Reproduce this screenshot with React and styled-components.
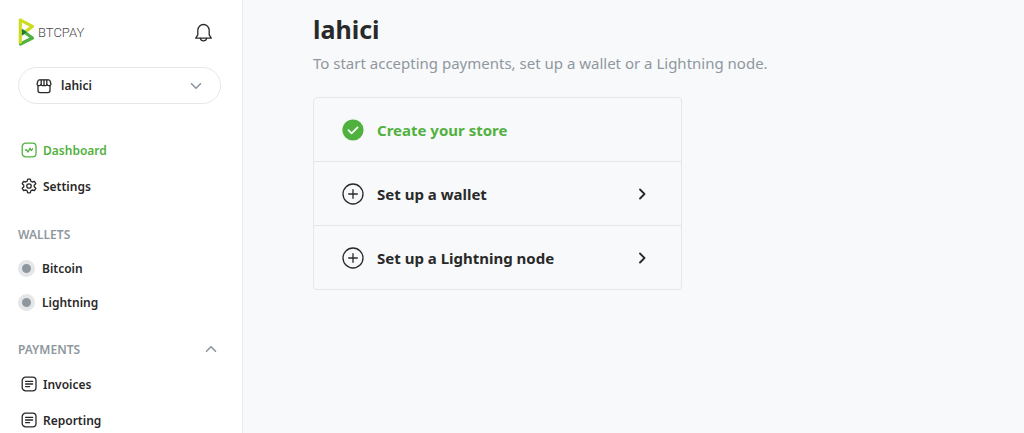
import React, { useState } from "react";
import styled, { createGlobalStyle } from "styled-components";

const GlobalStyle = createGlobalStyle`
  * {
    box-sizing: border-box;
  }

  body {
    margin: 0;
    background: #f8f9fb;
    color: #292929;
    font-family: "Noto Sans", "Open Sans", sans-serif;
  }
`;

const Layout = styled.div`
  display: flex;
  height: 100vh;
  overflow: hidden;
`;

const Sidebar = styled.aside`
  flex: none;
  width: 243px;
  padding: 18px 21px 0 18px;
  background: #ffffff;
  border-right: 1px solid #e9ecef;
  overflow: hidden;
`;

const SidebarHeader = styled.header`
  display: flex;
  align-items: center;
  justify-content: space-between;
  height: 28px;
  padding-right: 8px;
`;

const Brand = styled.a`
  display: flex;
  align-items: center;
  gap: 3px;
  color: #4a4a4a;
  font-family: Roboto, sans-serif;
  font-size: 13px;
  font-weight: 300;
  text-decoration: none;
`;

const IconButton = styled.button`
  display: flex;
  padding: 0;
  border: 0;
  background: none;
  color: ${({ $muted }) => ($muted ? "#8f979e" : "#292929")};
  cursor: pointer;
`;

const StoreSelector = styled.label`
  display: flex;
  align-items: center;
  height: 37px;
  margin: 21px 0 28px;
  padding: 0 18px 0 17px;
  border: 1px solid #e4e7ea;
  border-radius: 19px;
`;

const StoreSelect = styled.select`
  flex: 1;
  appearance: none;
  margin-left: 9px;
  padding: 0;
  border: 0;
  outline: 0;
  background: none;
  color: #292929;
  font: inherit;
  font-size: 12px;
  font-weight: 600;
`;

const MutedIcon = styled.span`
  display: flex;
  color: #8f979e;
`;

const NavList = styled.ul`
  margin: 0;
  padding: 0;
  list-style: none;
`;

const NavLink = styled.a`
  display: flex;
  align-items: center;
  gap: ${({ $status }) => ($status ? "7px" : "6px")};
  height: ${({ $status }) => ($status ? "34px" : "36px")};
  padding-left: ${({ $status }) => ($status ? "0" : "3px")};
  color: ${({ $active }) => ($active ? "#51b13e" : "#292929")};
  font-size: 12px;
  font-weight: 600;
  text-decoration: none;
`;

const SectionHeader = styled.div`
  display: flex;
  align-items: center;
  justify-content: space-between;
  height: 34px;
  margin-top: 13px;
  padding-right: 4px;
`;

const SectionTitle = styled.h2`
  margin: 0;
  color: #8f979e;
  font-size: 12px;
  font-weight: 600;
`;

const StatusDot = styled.span`
  width: 17px;
  height: 17px;
  border: 4px solid #e4e6e8;
  border-radius: 50%;
  background: #8f979e;
`;

const Main = styled.main`
  flex: 1;
  min-width: 0;
  padding: 11px 70px;
`;

const Title = styled.h1`
  margin: 0;
  font-size: 25px;
  font-weight: 700;
  line-height: 36px;
`;

const Lead = styled.p`
  margin: 4px 0 22px;
  color: #8f979e;
  font-size: 15px;
  line-height: 24px;
`;

const StepList = styled.ol`
  max-width: 369px;
  margin: 0;
  padding: 0;
  border: 1px solid #e4e7ea;
  border-radius: 4px;
  list-style: none;
`;

const StepItem = styled.li`
  & + & {
    border-top: 1px solid #e4e7ea;
  }
`;

const Step = styled.a`
  display: flex;
  align-items: center;
  gap: 13px;
  height: 63px;
  padding: 0 33px 0 28px;
  color: ${({ $done }) => ($done ? "#51b13e" : "#292929")};
  font-size: 15px;
  font-weight: 700;
  text-decoration: none;
`;

const StepLabel = styled.span`
  flex: 1;
`;

const LogoMark = () => (
  <svg width="17" height="28" viewBox="0 0 17 28" aria-hidden="true">
    <path d="M2.5 2.2L14.4 8.4L5 15.5" fill="none" stroke="#cedc21" strokeWidth="3.2" strokeLinejoin="round" strokeLinecap="round" />
    <path d="M5 13L14.4 20L2.5 26" fill="none" stroke="#51b13e" strokeWidth="3.2" strokeLinejoin="round" strokeLinecap="round" />
    <path d="M2.3 2.2v22" fill="none" stroke="#cedc21" strokeWidth="3.2" strokeLinecap="round" />
    <path d="M3.9 10.8v7l4.8-3.5z" fill="#1e7a44" />
  </svg>
);

// shared outline icon base
const Outline = ({ size, width = 1.3, children }) => (
  <svg
    width={size}
    height={size}
    viewBox={`0 0 ${size} ${size}`}
    fill="none"
    stroke="currentColor"
    strokeWidth={width}
    strokeLinecap="round"
    strokeLinejoin="round"
    aria-hidden="true"
  >
    {children}
  </svg>
);

const BellIcon = () => (
  <Outline size={19}>
    <path d="M3.8 11.8V7.2a5.700 5.700 0 0 1 11.4 0v4.600l2.100 3.300H1.700z" />
    <path d="M6.400 15.300c.3 1.800 1.500 2.500 3.100 2.500s2.800-.7 3.100-2.500" />
  </Outline>
);

const StoreIcon = () => (
  <Outline size={16}>
    <path d="M2 7.4v5.200a2 2 0 0 0 2 2h8a2 2 0 0 0 2-2V7.4" />
    <path d="M3.4 1.8h9.200a1.500 1.500 0 0 1 1.500 1.200l.9 3.100a1.500 1.500 0 0 1-1.500 1.500h-.9a1.600 1.600 0 0 1-1.600-1.300 1.600 1.600 0 0 1-1.500 1.300h-3a1.600 1.600 0 0 1-1.500-1.300 1.600 1.600 0 0 1-1.600 1.300h-.9A1.500 1.500 0 0 1 1 6.100L1.900 3a1.500 1.500 0 0 1 1.500-1.200z" />
    <path d="M5.200 2v4.200M8 2v5.400M10.800 2v4.200" />
  </Outline>
);

const DashboardIcon = () => (
  <Outline size={16}>
    <rect x="1.2" y="1.2" width="13.8" height="13.6" rx="3.4" />
    <path d="M4.400 8h1.200l1.500 2L9 6.200l1.300 2.300 1.300-1.700" />
  </Outline>
);

const GearIcon = () => (
  <Outline size={16}>
    <path d="M6.700 1.100h2.600l.6 2.100 1.300.8 2.200-.6 1.400 2.300-1.600 1.500v1.600l1.600 1.500-1.400 2.300-2.200-.6-1.300.8-.6 2.100H6.700l-.6-2.100-1.300-.8-2.200.6-1.400-2.300 1.600-1.500V7.200L1.200 5.700l1.400-2.300 2.200.6 1.300-.8z" />
    <circle cx="8" cy="8" r="2.2" />
  </Outline>
);

const InvoiceIcon = () => (
  <Outline size={16}>
    <rect x="1.2" y="1.2" width="13.8" height="13.6" rx="3.4" />
    <path d="M4.6 5.4h7M4.6 8h7M4.6 10.6h4" />
  </Outline>
);

const Chevron = ({ d, width = 1.6 }) => (
  <Outline size={12} width={width}>
    <path d={d} />
  </Outline>
);

const CheckIcon = () => (
  <svg width="22" height="22" viewBox="0 0 22 22" fill="none" aria-hidden="true">
    <circle cx="11" cy="11" r="10.6" fill="#51b13e" />
    <path d="M6.4 11.2l3.200 3.100 6-5.900" stroke="#fff" strokeWidth="1.7" strokeLinecap="round" strokeLinejoin="round" />
  </svg>
);

const PlusIcon = () => (
  <Outline size={22}>
    <circle cx="11" cy="11" r="10" />
    <path d="M11 6.7v8.600M6.700 11h8.600" />
  </Outline>
);

const steps = [
  { label: "Create your store", done: true },
  { label: "Set up a wallet" },
  { label: "Set up a Lightning node" },
];

const App = () => {
  const [store, setStore] = useState("lahici");
  const [open, setOpen] = useState(true);

  return (
    <Layout>
      <GlobalStyle />
      <Sidebar>
        <SidebarHeader>
          <Brand href="#">
            <LogoMark />
            BTCPAY
          </Brand>
          <IconButton type="button" aria-label="Notifications">
            <BellIcon />
          </IconButton>
        </SidebarHeader>

        <StoreSelector>
          <StoreIcon />
          <StoreSelect
            aria-label="Store"
            value={store}
            onChange={(e) => setStore(e.target.value)}
          >
            <option value="lahici">lahici</option>
          </StoreSelect>
          <MutedIcon>
            <Chevron d="M1.5 3.7L6 8.3l4.5-4.6" />
          </MutedIcon>
        </StoreSelector>

        <nav>
          <NavList>
            <li>
              <NavLink href="#dashboard" $active>
                <DashboardIcon />
                Dashboard
              </NavLink>
            </li>
            <li>
              <NavLink href="#settings">
                <GearIcon />
                Settings
              </NavLink>
            </li>
          </NavList>

          <SectionHeader>
            <SectionTitle>WALLETS</SectionTitle>
          </SectionHeader>
          <NavList>
            <li>
              <NavLink href="#bitcoin" $status>
                <StatusDot />
                Bitcoin
              </NavLink>
            </li>
            <li>
              <NavLink href="#lightning" $status>
                <StatusDot />
                Lightning
              </NavLink>
            </li>
          </NavList>

          <SectionHeader>
            <SectionTitle>PAYMENTS</SectionTitle>
            <IconButton
              type="button"
              $muted
              aria-label="Toggle payments"
              aria-expanded={open}
              onClick={() => setOpen(!open)}
            >
              <Chevron d="M1.5 8.3L6 3.7l4.5 4.6" />
            </IconButton>
          </SectionHeader>
          {open && (
            <NavList>
              <li>
                <NavLink href="#invoices">
                  <InvoiceIcon />
                  Invoices
                </NavLink>
              </li>
              <li>
                <NavLink href="#reporting">
                  <InvoiceIcon />
                  Reporting
                </NavLink>
              </li>
            </NavList>
          )}
        </nav>
      </Sidebar>

      <Main>
        <Title>{store}</Title>
        <Lead>
          To start accepting payments, set up a wallet or a Lightning node.
        </Lead>
        <StepList>
          {steps.map(({ label, done }) => (
            <StepItem key={label}>
              <Step as={done ? "div" : "a"} href={done ? undefined : "#setup"} $done={done}>
                {done ? <CheckIcon /> : <PlusIcon />}
                <StepLabel>{label}</StepLabel>
                {!done && <Chevron d="M4 1.5L8.5 6 4 10.5" width={1.8} />}
              </Step>
            </StepItem>
          ))}
        </StepList>
      </Main>
    </Layout>
  );
};

export default App;
